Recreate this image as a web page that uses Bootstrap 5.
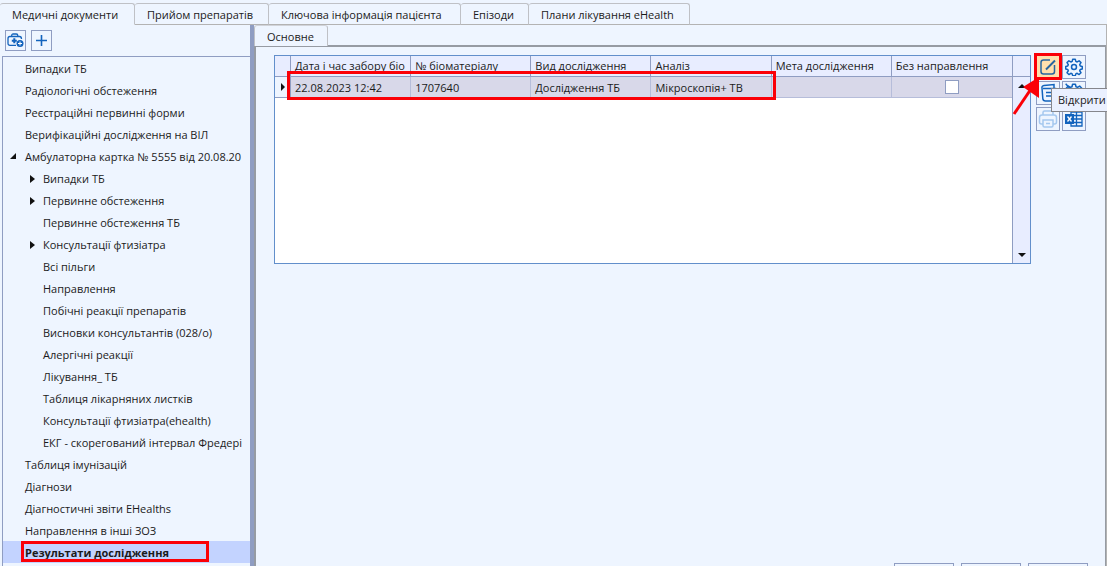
<!DOCTYPE html>
<html lang="uk">
<head>
<meta charset="utf-8">
<meta name="viewport" content="width=device-width, initial-scale=1">
<title>Медичні документи</title>
<link rel="stylesheet" href="https://cdn.jsdelivr.net/npm/bootstrap@5.3.0/dist/css/bootstrap.min.css">
<style>
:root { --pane:#eef5ff; --line:#8f9dc2; --blue:#628fcb; --gray:#b3b3b3; --ink:#1b1b1b; --alert:#fb0007; }
body { font-family:"Open Sans","Noto Sans",sans-serif; font-size:11px; line-height:16px; color:var(--ink); background:#fff; overflow:hidden; }
button { font:inherit; color:inherit; padding:0; background:none; border:0; }
.app { height:calc(100vh + 20px); margin-right:2px; background:var(--pane); }
.tabs-main { height:25px; padding-top:3px; }
.tabs-main::after { content:""; flex:1; border-bottom:1px solid var(--gray); }
.tab-btn { height:22px; padding:2px 0 0 12px; text-align:left; border:1px solid #bfc1c6; border-left-width:0; border-bottom-color:var(--gray); border-radius:3px 3px 0 0; white-space:nowrap; }
.tab-btn.current { border-bottom-color:transparent; }
.w-docs { width:135px; } .w-meds { width:134px; } .w-key { width:192px; } .w-epi { width:68px; } .w-plan { width:161px; }
.side { width:250px; flex:none; }
.tools { height:31px; padding:5px; gap:5px; }
.tool-btn { width:21px; height:21px; border:1px solid var(--line); }
.tree { border:1px solid var(--line); border-right:0; margin-left:2px; }
.tree ul { list-style:none; margin:0; padding:0; }
.tree a { height:22px; padding:4px 0 0 22px; color:inherit; text-decoration:none; white-space:nowrap; display:block; position:relative; }
.tree ul ul a { padding-left:40px; }
.tree .open::before, .tree .closed::before { content:""; position:absolute; background:#111; }
.tree .closed::before { left:27px; top:8px; width:5px; height:8px; clip-path:polygon(0 0,100% 50%,0 100%); }
.tree .open::before { left:7px; top:8px; width:6px; height:6px; clip-path:polygon(100% 0,100% 100%,0 100%); }
.tree .chosen { background:#c3d3ff; font-weight:700; }
.redbox { position:absolute; border:3px solid var(--alert); pointer-events:none; }
.box-tree { right:41px; top:0; height:21px; left:18px; }
.splitter { width:4px; flex:none; background:var(--line); }
.main { border-right:1px solid var(--gray); min-width:0; }
.tabs-sub { height:20px; }
.tabs-sub .tab-btn { width:74px; height:21px; border-left-width:1px; border-top-color:#d0d3d9; border-bottom:0; background:var(--pane); position:relative; }
.panel { border:2px solid #969ba3; border-width:2px 1px 0 2px; padding:8px 19px 0 18px; }
.grid-box { height:209px; border:1px solid var(--blue); background:#fff; min-width:0; }
.data { table-layout:fixed; width:100%; border-collapse:separate; border-spacing:0; }
.data th, .data td { height:21px; padding:2px 3px 0 4px; font-weight:400; border-right:1px solid var(--line); border-bottom:1px solid var(--line); white-space:nowrap; line-height:16px; vertical-align:middle; }
.data th { background:#e8edff; padding-top:0; }
.data td { background:#d8d8e9; border-color:#b6bdda; }
.data td:first-child { background:var(--pane); border-color:var(--line); padding:0 0 0 6px; }
.data th:last-child, .data td:last-child { border-right:0; }
.col-mark { width:16px; }
.data svg { display:block; }
.flag { appearance:none; width:14px; height:14px; margin:0 auto; display:block; border:1px solid var(--line); background:#fff; }
.vbar { width:18px; flex:none; background:#e8edff; border-left:1px solid var(--line); }
.vbar-head { height:21px; border-bottom:1px solid var(--line); }
.vbar button { height:17px; }
.box-row { left:12px; right:254px; top:15px; height:29px; }
.icons { display:grid; grid-template-columns:24px 24px; grid-auto-rows:24px; gap:2px; margin-left:5px; position:relative; }
.icons button { border:1px solid var(--line); }
.icons .hot { background:#ffe0ae; }
.icons svg, .tools svg { display:block; margin:auto; }
.box-icon { left:-2px; top:-2px; width:28px; height:27px; }
.icons .pointer { position:absolute; left:-24px; top:18px; }
.tip { position:absolute; left:15px; top:33px; width:56px; height:24px; padding:3px 0 0 6px; border:1px solid #85868c; border-right:0; background:#eaf0ff; white-space:nowrap; }
.cmds { margin-top:auto; gap:7px; margin-right:-2px; height:23px; }
.cmds button { width:60px; border:1px solid var(--line); }
</style>
</head>
<body>
<div class="app d-flex flex-column">
  <nav class="tabs-main d-flex">
    <button class="tab-btn w-docs current">Медичні документи</button>
    <button class="tab-btn w-meds">Прийом препаратів</button>
    <button class="tab-btn w-key">Ключова інформація пацієнта</button>
    <button class="tab-btn w-epi">Епізоди</button>
    <button class="tab-btn w-plan">Плани лікування eHealth</button>
  </nav>
  <div class="d-flex flex-grow-1">
    <aside class="side d-flex flex-column">
      <div class="tools d-flex">
        <button class="tool-btn" aria-label="Новий документ"><svg width="17" height="15" viewBox="0 0 17 15" fill="none" stroke="#1263bd" stroke-width="1.3"><path d="M9 12.300H3Q1 12.300 1 10.300V5.500Q1 3.500 3 3.500h9.500Q14.500 3.500 14.500 6M4.700 3V2.500Q4.700 1 6.200 1H9.300Q10.800 1 10.800 2.500V3"/><path d="M7.300 5.300v5M4.800 7.800h5" stroke-width="2"/><circle cx="13" cy="10.500" r="3.500" fill="#1263bd" stroke="none"/><path d="M13 8.500v4M11 10.500h4" stroke="#fff" stroke-width="1"/></svg></button>
        <button class="tool-btn" aria-label="Додати"><svg width="13" height="13" viewBox="0 0 13 13" stroke="#1263bd" stroke-width="1.6"><path d="M6.500 1v11M1 6.500h11"/></svg></button>
      </div>
      <nav class="tree flex-grow-1">
        <ul>
          <li><a href="#">Випадки ТБ</a></li>
          <li><a href="#">Радіологічні обстеження</a></li>
          <li><a href="#">Реєстраційні первинні форми</a></li>
          <li><a href="#">Верифікаційні дослідження на ВІЛ</a></li>
          <li><a href="#" class="open">Амбулаторна картка № 5555 від 20.08.20</a>
            <ul>
              <li><a href="#" class="closed">Випадки ТБ</a></li>
              <li><a href="#" class="closed">Первинне обстеження</a></li>
              <li><a href="#">Первинне обстеження ТБ</a></li>
              <li><a href="#" class="closed">Консультації фтизіатра</a></li>
              <li><a href="#">Всі пільги</a></li>
              <li><a href="#">Направлення</a></li>
              <li><a href="#">Побічні реакції препаратів</a></li>
              <li><a href="#">Висновки консультантів (028/о)</a></li>
              <li><a href="#">Алергічні реакції</a></li>
              <li><a href="#">Лікування_ ТБ</a></li>
              <li><a href="#">Таблиця лікарняних листків</a></li>
              <li><a href="#">Консультації фтизіатра(ehealth)</a></li>
              <li><a href="#">ЕКГ - скорегований інтервал Фредері</a></li>
            </ul>
          </li>
          <li><a href="#">Таблиця імунізацій</a></li>
          <li><a href="#">Діагнози</a></li>
          <li><a href="#">Діагностичні звіти EHealths</a></li>
          <li><a href="#">Направлення в інші ЗОЗ</a></li>
          <li><a href="#" class="chosen">Результати дослідження<i class="redbox box-tree"></i></a></li>
        </ul>
      </nav>
    </aside>
    <div class="splitter"></div>
    <main class="main d-flex flex-column flex-grow-1">
      <nav class="tabs-sub d-flex"><button class="tab-btn">Основне</button></nav>
      <section class="panel d-flex flex-column flex-grow-1">
        <div class="d-flex align-items-start">
          <div class="grid-box d-flex flex-grow-1 position-relative">
            <div class="flex-grow-1 overflow-hidden">
              <table class="data">
                <colgroup><col class="col-mark"><col><col><col><col><col><col></colgroup>
                <thead><tr>
                  <th></th>
                  <th>Дата і час забору біо</th>
                  <th>№ біоматеріалу</th>
                  <th>Вид дослідження</th>
                  <th>Аналіз</th>
                  <th>Мета дослідження</th>
                  <th>Без направлення</th>
                </tr></thead>
                <tbody><tr>
                  <td><svg width="4" height="8"><path d="M0 0l4 4-4 4z" fill="#111"/></svg></td>
                  <td>22.08.2023 12:42</td>
                  <td>1707640</td>
                  <td>Дослідження ТБ</td>
                  <td>Мікроскопія+ ТВ</td>
                  <td></td>
                  <td class="pt-0"><input class="flag" type="checkbox" aria-label="Без направлення"></td>
                </tr></tbody>
              </table>
            </div>
            <div class="vbar d-flex flex-column">
              <div class="vbar-head"></div>
              <button aria-label="Вгору"><svg class="d-block mx-auto" width="8" height="4"><path d="M0 4l4-4 4 4z" fill="#111"/></svg></button>
              <button class="mt-auto" aria-label="Вниз"><svg class="d-block mx-auto" width="8" height="4"><path d="M0 0l4 4 4-4z" fill="#111"/></svg></button>
            </div>
            <i class="redbox box-row"></i>
          </div>
          <div class="icons">
            <button class="hot" aria-label="Відкрити"><svg width="18" height="18" viewBox="0 0 18 18" fill="none" stroke="#28659f" stroke-width="1.5"><path d="M11 2H4.500Q2 2 2 4.500v9Q2 16 4.500 16h8.500Q15.500 16 15.500 13.500V7"/><path d="M7 11.500L16 2.500" stroke-width="2"/></svg></button>
            <button aria-label="Налаштування"><svg width="18" height="18" viewBox="0 0 24 24" fill="none" stroke="#1263bd" stroke-width="2"><circle cx="12" cy="12" r="3.300"/><path id="gear" d="M10.300 1.500h3.400l.7 3 1.800.8 2.600-1.600 2.500 2.500-1.700 2.600.8 1.800 2.600.6v3.400l-2.600.6-.8 1.800 1.700 2.600-2.500 2.500-2.600-1.700-1.800.8-.7 2.600h-3.400l-.7-2.600-1.800-.8-2.600 1.700-2.500-2.500 1.700-2.600-.8-1.800L1 14.600v-3.400l2.600-.6.8-1.800L2.700 6.200l2.500-2.500 2.600 1.600 1.800-.8z" stroke-linejoin="round"/></svg></button>
            <button aria-label="Журнал"><svg width="20" height="20" viewBox="0 0 20 20" fill="none" stroke="#1263bd" stroke-width="1.500"><path d="M5 5.500h12.500V18H7.500Q5 18 4.800 15.500L4 5Q3.500 3 6 2.500L16 1.500v4M8 9.500h7M8 13h7"/></svg></button>
            <button aria-label="Параметри"><svg width="20" height="20" viewBox="0 0 24 24" fill="none" stroke="#1263bd" stroke-width="1.800"><circle cx="12" cy="12" r="3.300"/><use href="#gear"/><path d="M2 1l20 22"/></svg></button>
            <button aria-label="Друк"><svg width="20" height="20" viewBox="0 0 20 20" fill="none" stroke="#a5c8ef" stroke-width="1.500"><path d="M5 6V3.500Q5 2 6.500 2h7Q15 2 15 3.500V6M5 15H3.500Q1.500 15 1.500 13V8.500Q1.500 6 4 6h12Q18.500 6 18.500 8.500V13Q18.500 15 16.500 15H15M5 11h10v5.500Q15 18 13.500 18h-7Q5 18 5 16.500zM8 14.500h4"/></svg></button>
            <button aria-label="Експорт в Excel"><svg width="18" height="18" viewBox="0 0 18 18" fill="none" stroke="#1263bd" stroke-width="1.300"><path d="M6 2h11v14H6zM6 5.500h11M6 9h11M6 12.500h11M11.500 2v14"/><path d="M0 4h9v10H0z" fill="#1263bd" stroke="none"/><path d="M2.500 6.500l4 5M6.500 6.500l-4 5" stroke="#fff"/></svg></button>
            <i class="redbox box-icon"></i>
            <div class="tip" role="tooltip">Відкрити</div>
            <svg class="pointer" width="34" height="44" viewBox="0 0 34 44"><path d="M2 41L19 16" stroke="#fb0007" stroke-width="3"/><path d="M27 4L27 25L11 14z" fill="#fb0007"/></svg>
          </div>
        </div>
        <div class="cmds d-flex justify-content-end">
          <button aria-label="Зберегти"></button><button aria-label="Скасувати"></button><button aria-label="Закрити"></button>
        </div>
      </section>
    </main>
  </div>
</div>
<script src="https://cdn.jsdelivr.net/npm/bootstrap@5.3.0/dist/js/bootstrap.bundle.min.js"></script>
</body>
</html>
